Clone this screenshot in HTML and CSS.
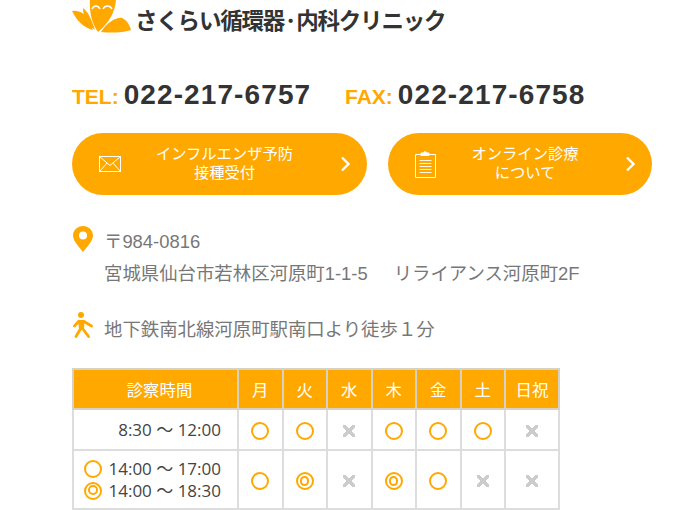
FILE: index.html
```html
<!DOCTYPE html>
<html>
<head>
    <meta charset="UTF-8">
    <meta name="viewport" content="width=device-width, initial-scale=1.0">
    <title>さくらい循環器・内科クリニック</title>
    <link rel="stylesheet" href="styles.css">
</head>
<body>
    <div class="container">
        <div class="logo">
            <svg class="logo-mark" width="60" height="34" viewBox="0 0 60 34">
                <path d="M18 -2 H44 C44 10 38 22 26 32 C20 24 17 12 18 -2Z" fill="#ffa800"/>
                <path d="M0 11 C7 10 14 14 18 21 C19 25 20 28 21 30 C12 28 5 21 0 11Z" fill="#ffa800"/>
                <path d="M11 8 C16 12 19 18 23 30 C16 25 11 18 11 8Z" fill="#ffa800"/>
                <path d="M29 32 C35 22 45 17 50 18 C55 20 58 26 59 30 C50 33 38 33 29 32Z" fill="#ffa800"/>
                <path d="M20 9 C22 5 26 5 28 9 M31 9 C33 5 38 5 40 9" fill="none" stroke="#fff" stroke-width="1.5"/>
            </svg>
            <span class="logo-text">さくらい循環器·内科クリニック</span>
        </div>

        <div class="contact">
            <p class="contact-item"><span class="contact-label">TEL:</span><span class="contact-num">022-217-6757</span></p>
            <p class="contact-item"><span class="contact-label">FAX:</span><span class="contact-num">022-217-6758</span></p>
        </div>

        <div class="btn-row">
            <a class="pill-btn pill-wide">
                <svg class="pill-icon" width="22" height="16" viewBox="0 0 22 16" fill="none" stroke="#fff" stroke-width="1">
                    <rect x="0.5" y="0.5" width="21" height="15"/>
                    <path d="M0.5 0.5 L11 9.5 L21.5 0.5 M0.5 15.5 L8 7 M21.5 15.5 L14 7"/>
                </svg>
                <span class="pill-text">インフルエンザ予防<br>接種受付</span>
                <svg class="pill-arrow" width="11" height="16" viewBox="0 0 11 16" fill="none" stroke="#fff" stroke-width="2.4">
                    <path d="M2 1.5 L8.5 8 L2 14.5"/>
                </svg>
            </a>
            <a class="pill-btn pill-narrow">
                <svg class="pill-icon" width="22" height="28" viewBox="0 0 22 28" fill="none" stroke="#fff" stroke-width="1">
                    <path d="M6 4.5 H0.5 V27.5 H20.5 V4.5 H14"/>
                    <path d="M6 5.5 V3 H8.5 C9 1.2 11 1.2 11.5 3 H14 V5.5Z" fill="#fff"/>
                    <path d="M4.5 10.5 H16.5 M4.5 13.5 H16.5 M4.5 16.5 H16.5 M4.5 19.5 H16.5 M4.5 22.5 H16.5" stroke-width="0.9"/>
                </svg>
                <span class="pill-text">オンライン診療<br>について</span>
                <svg class="pill-arrow" width="11" height="16" viewBox="0 0 11 16" fill="none" stroke="#fff" stroke-width="2.4">
                    <path d="M2 1.5 L8.5 8 L2 14.5"/>
                </svg>
            </a>
        </div>

        <div class="access-row address">
            <svg class="access-icon" width="20" height="26" viewBox="0 0 20 26">
                <path fill="#ffa800" fill-rule="evenodd" d="M10 0 C15.5 0 20 4.3 20 9.6 C20 15 14 21 10 26 C6 21 0 15 0 9.6 C0 4.3 4.5 0 10 0Z M10 5.6 A4 4 0 1 0 10 13.6 A4 4 0 1 0 10 5.6Z"/>
            </svg>
            <p class="access-text">〒984-0816<br>宮城県仙台市若林区河原町1-1-5<span class="building">リライアンス河原町2F</span></p>
        </div>

        <div class="access-row walk">
            <svg class="access-icon" width="20" height="26" viewBox="0 0 20 26" fill="none" stroke="#ffa800" stroke-width="2.8" stroke-linecap="round" stroke-linejoin="round">
                <circle cx="8" cy="3" r="3" fill="#ffa800" stroke="none"/>
                <path d="M1.5 14 L5.5 9.5 H11 L18.5 14 M8.5 15 L3 24.5 M8.5 15 L15.5 24.5"/>
                <path d="M5 8 H11.5 L11 17 H6Z" fill="#ffa800" stroke="none"/>
            </svg>
            <p class="access-text">地下鉄南北線河原町駅南口より徒歩１分</p>
        </div>

        <table class="hours">
            <tr class="hours-head">
                <th class="col-time">診察時間</th>
                <th>月</th><th>火</th><th>水</th><th>木</th><th>金</th><th>土</th><th class="col-holiday">日祝</th>
            </tr>
            <tr class="row-am">
                <td class="time-cell"><div class="time-line am-line">8:30 ～ 12:00</div></td>
                <td><i class="mark open"></i></td>
                <td><i class="mark open"></i></td>
                <td><i class="cross"></i></td>
                <td><i class="mark open"></i></td>
                <td><i class="mark open"></i></td>
                <td><i class="mark open"></i></td>
                <td><i class="cross"></i></td>
            </tr>
            <tr class="row-pm">
                <td class="time-cell">
                    <div class="time-line"><i class="mark open"></i>14:00 ～ 17:00</div>
                    <div class="time-line"><i class="mark double"></i>14:00 ～ 18:30</div>
                </td>
                <td><i class="mark open"></i></td>
                <td><i class="mark double"></i></td>
                <td><i class="cross"></i></td>
                <td><i class="mark double"></i></td>
                <td><i class="mark open"></i></td>
                <td><i class="cross"></i></td>
                <td><i class="cross"></i></td>
            </tr>
        </table>
    </div>
</body>
</html>
```

FILE: styles.css
```css
html, body {
    margin: 0;
    padding: 0;
    background: #fff;
    overflow: hidden;
}
body {
    height: 510px;
    font-family: "Liberation Sans", "Noto Sans CJK JP", sans-serif;
    color: #777;
}
p {
    margin: 0;
}
.container {
    padding-left: 72px;
    width: 608px;
}
.logo {
    display: flex;
    align-items: flex-start;
    height: 34px;
    overflow: hidden;
}
.logo-mark {
    display: block;
    flex: none;
}
.logo-text {
    position: relative;
    margin-left: 3px;
    margin-top: 2px;
    font-family: "Noto Sans CJK JP", sans-serif;
    font-size: 22.5px;
    line-height: 34px;
    font-weight: 700;
    color: #333;
    letter-spacing: -1.2px;
    white-space: nowrap;
}
/* pale green flower behind the third kana */
.logo-text::before {
    content: "";
    position: absolute;
    left: 31px;
    top: 7px;
    width: 13px;
    height: 18px;
    z-index: -1;
    border-radius: 50%;
    background: radial-gradient(#a9d89a, rgba(169,216,154,0) 75%);
}
.contact {
    display: flex;
    margin-top: 42px;
    height: 38px;
    align-items: center;
}
.contact-item {
    display: flex;
    align-items: baseline;
    width: 273px;
}
.contact-label {
    font-size: 21px;
    font-weight: bold;
    color: #ffa800;
    margin-right: 5px;
}
.contact-num {
    font-size: 28px;
    font-weight: bold;
    color: #333;
    letter-spacing: 1.1px;
}
.btn-row {
    display: flex;
    gap: 21px;
    margin-top: 19px;
}
.pill-btn {
    display: flex;
    align-items: center;
    height: 62px;
    border-radius: 31px;
    background: #ffa800;
    color: #fff;
    box-sizing: border-box;
}
.pill-wide {
    width: 295px;
    padding: 0 16px 0 27px;
}
.pill-narrow {
    width: 264px;
    padding: 0 16px 0 27px;
}
.pill-icon {
    flex: none;
}
.pill-text {
    flex: 1;
    margin-right: 12px;
    padding-bottom: 2px;
    text-align: center;
    font-size: 15.3px;
    line-height: 19px;
}
.pill-arrow {
    flex: none;
}
.access-row {
    display: flex;
    align-items: flex-start;
}
.address {
    margin-top: 31px;
}
.walk {
    margin-top: 22px;
}
.access-icon {
    flex: none;
    margin-left: 1px;
}
.access-text {
    margin-left: 11px;
    font-size: 18.4px;
    line-height: 32px;
}
.walk .access-text {
    margin-top: 2px;
}
.building {
    margin-left: 26px;
}
.hours {
    margin-top: 22px;
    width: 488px;
    border-collapse: collapse;
    table-layout: fixed;
    font-family: "Open Sans", "Noto Sans CJK JP", sans-serif;
}
.hours th, .hours td {
    border: 2px solid #ddd;
    text-align: center;
    padding: 0;
}
.hours th {
    background: #ffa800;
    color: #fff;
    font-weight: normal;
    font-size: 16.4px;
    border-color: #d8d2c4;
    height: 38px;
}
.hours th.col-time {
    width: 155px;
    padding-left: 8px;
}
.col-holiday {
    width: 52px;
}
.row-am td {
    height: 39px;
}
.row-pm td {
    height: 57px;
}
.time-cell {
    color: #444;
    font-size: 17px;
}
.time-line {
    display: flex;
    align-items: center;
    justify-content: flex-end;
    padding-right: 16px;
    line-height: 22px;
}
.time-line .mark {
    margin-right: 6px;
}
.mark {
    display: inline-block;
    vertical-align: middle;
    width: 18px;
    height: 18px;
    box-sizing: border-box;
    border: 2.4px solid #ffa800;
    border-radius: 50%;
}
.mark.double {
    position: relative;
}
.mark.double::after {
    content: "";
    position: absolute;
    left: 1.8px;
    top: 1.8px;
    width: 9.6px;
    height: 9.6px;
    box-sizing: border-box;
    border: 2px solid #ffa800;
    border-radius: 50%;
}
.cross {
    display: inline-block;
    vertical-align: middle;
    width: 12px;
    height: 12px;
    background:
        linear-gradient(45deg, transparent 41%, #ccc 41%, #ccc 59%, transparent 59%),
        linear-gradient(-45deg, transparent 41%, #ccc 41%, #ccc 59%, transparent 59%);
}
```
